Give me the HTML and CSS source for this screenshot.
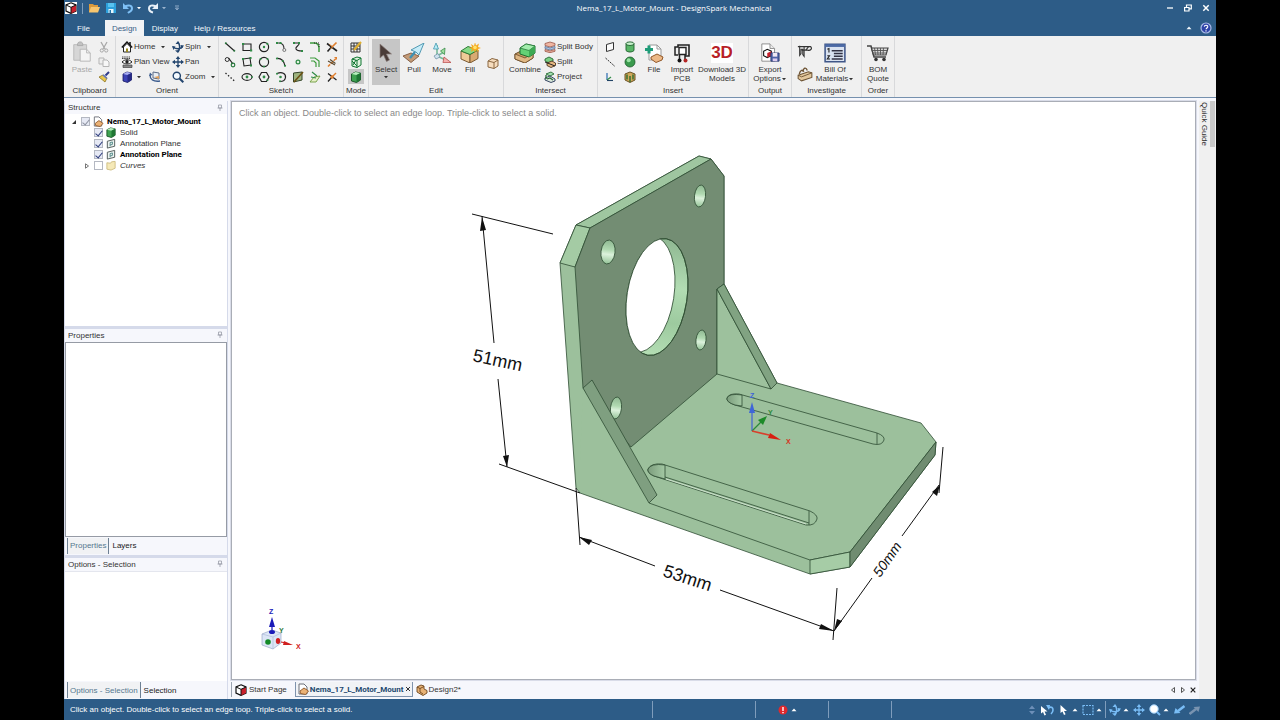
FILE: index.html
```html
<!DOCTYPE html>
<html lang="en">
<head>
<meta charset="utf-8">
<title>Nema_17_L_Motor_Mount - DesignSpark Mechanical</title>
<link rel="stylesheet" href="styles.css">
</head>
<body>
<svg class="sprite" aria-hidden="true">
  <symbol id="cube-red" viewBox="0 0 12 12"><path d="M6 .8 11 3v6L6 11.400 1 9V3z" fill="#fff" stroke="#111" stroke-width="1.200"/><path d="M6 5.300 11 3v6l-5 2.400z" fill="#c8202c"/><path d="M1 3l5 2.300L11 3M6 5.300v6" fill="none" stroke="#111"/></symbol>
  <symbol id="folder" viewBox="0 0 12 12"><path d="M1 2h4l1 1h4v7H1z" fill="#d99a3d"/><path d="M3 5h9l-2 5.500H1z" fill="#f7c66f"/></symbol>
  <symbol id="save" viewBox="0 0 12 12"><path d="M1 1h10v10H1z" fill="#2da0dc"/><path d="M3 1h6v4H3z" fill="#58c3f0"/><path d="M3.500 7h5v4h-5z" fill="#e8f6fd"/><path d="M4.500 8h1.500v3H4.500z" fill="#2379b0"/></symbol>
  <symbol id="undo" viewBox="0 0 12 12"><path d="M3 4.500c4-2 7-1 7 2S7 10 6 11" fill="none" stroke="#7fc0f5" stroke-width="2"/><path d="M1 1v6h6z" fill="#7fc0f5"/></symbol>
  <symbol id="redo" viewBox="0 0 12 12"><path d="M9 4.500c-4-2-7-1-7 2S4 10 6 10.500" fill="none" stroke="#e8f0f8" stroke-width="2"/><path d="M11 1v6H5z" fill="#e8f0f8"/></symbol>
  <symbol id="tri-down" viewBox="0 0 6 6"><path d="M1 2h4L3 4.200z" fill="currentColor"/></symbol>
  <symbol id="tri-up" viewBox="0 0 6 6"><path d="M.5 4.300h5L3 1.500z" fill="currentColor"/></symbol>
  <symbol id="pin" viewBox="0 0 8 8"><path d="M2.500 1h3v3h-3zM1.500 4h5M4 4v3" fill="none" stroke="#9a9da8" stroke-width=".8"/></symbol>
  <symbol id="paste" viewBox="0 0 22 24"><path d="M2 4h14v17H2z" fill="#d6d6d6" stroke="#b9b9b9"/><path d="M6 5c0-3 1-4 3-4s3 1 3 4z" fill="#c2c2c2" stroke="#aaa"/><path d="M9 9h7l4 4v9H9z" fill="#f4f4f4" stroke="#b5b5b5"/><path d="M16 9v4h4" fill="none" stroke="#b5b5b5"/></symbol>
  <symbol id="cut" viewBox="0 0 12 12"><path d="M3 1l4 7M9 1L5 8" stroke="#a8a8a8" stroke-width="1.300"/><circle cx="3.800" cy="9.500" r="1.600" fill="none" stroke="#a8a8a8"/><circle cx="8.200" cy="9.500" r="1.600" fill="none" stroke="#a8a8a8"/></symbol>
  <symbol id="copy" viewBox="0 0 12 12"><path d="M1 2h5v6H1z" fill="#eee" stroke="#b5b5b5"/><path d="M5 4h4l2 2v4.500H5z" fill="#f7f7f7" stroke="#b5b5b5"/></symbol>
  <symbol id="brush" viewBox="0 0 12 12"><path d="M11 1 7.500 4.500" stroke="#2f3b8a" stroke-width="2"/><path d="M1 6l4-2 4 3-2 4z" fill="#e8c64b" stroke="#8a7220" stroke-width=".8"/><path d="M5 3.800 9 7.500" stroke="#6478b8" stroke-width="1.600"/></symbol>
  <symbol id="home" viewBox="0 0 12 12"><path d="M2.500 6v5h7V6L6 2.500z" fill="#fff" stroke="#222"/><path d="M.8 6.500 6 1l5.200 5.500" fill="none" stroke="#111" stroke-width="1.400"/><path d="M5 7.500h2V11H5z" fill="#998a20"/><path d="M9 1v3" stroke="#111" stroke-width="1.500"/></symbol>
  <symbol id="planview" viewBox="0 0 12 12"><path d="M1 1h8M1 2.500h8" stroke="#444" stroke-dasharray="1.500 .7"/><path d="M1 6c3-3 7-3 10 0-3 2.500-7 2.500-10 0z" fill="#fff" stroke="#222"/><circle cx="6" cy="5.800" r="1.700" fill="#222"/><path d="M2 9h9v2.500H2z" fill="#888" stroke="#333" stroke-width=".6"/></symbol>
  <symbol id="cube-blue" viewBox="0 0 12 12"><path d="M2 3l4-2 4.500 1v7L6.500 11.500 2 10z" fill="#3c42b5" stroke="#15185e" stroke-width=".8"/><path d="M2 3l4-2 4.500 1-4 2z" fill="#a9aef0"/><path d="M6.500 4v7.500L10.500 9V2z" fill="#262a86"/></symbol>
  <symbol id="sheet-rot" viewBox="0 0 12 12"><path d="M4 1l6 1v6l-6-1z" fill="#e9eef4" stroke="#5b6b86"/><path d="M1 4c0 4 3 7 10 6" fill="none" stroke="#3d5d8e" stroke-width="1.400"/><path d="M5 6l5-1v3z" fill="#e0a05a"/><path d="M0 5l1-3.500L3.500 4z" fill="#3d5d8e"/></symbol>
  <symbol id="spin" viewBox="0 0 12 12"><path d="M6 1c2 3 2 7 0 10M1 6c3 2 7 2 9.500 0" fill="none" stroke="currentColor" stroke-width="1.500"/><path d="M6 0 3.500 3h4zM6 12l-3-2.500 4-.5zM0 5l3.500.5L1.500 9zM12 4.500 8.500 4l1 4z" fill="currentColor"/></symbol>
  <symbol id="pan" viewBox="0 0 12 12"><path d="M6 2v8M2 6h8" stroke="currentColor" stroke-width="1.300"/><path d="M6 0l2.300 3H3.700zM6 12l2.300-3H3.700zM0 6l3-2.300v4.600zM12 6 9 3.700v4.600z" fill="currentColor"/></symbol>
  <symbol id="zoom" viewBox="0 0 12 12"><circle cx="4.800" cy="4.800" r="3.600" fill="#f4faff" stroke="#23456e" stroke-width="1.400"/><path d="M7.500 7.500 11.300 11.300" stroke="#23456e" stroke-width="2"/></symbol>
  <symbol id="s-line" viewBox="0 0 12 12"><path d="M1.500 2 10.500 10" stroke="#222" stroke-width="1.200"/><circle cx="1.800" cy="2.300" r="1" fill="#2a7a3e"/><circle cx="10.300" cy="9.800" r="1" fill="#2a7a3e"/></symbol>
  <symbol id="s-tangent" viewBox="0 0 12 12"><circle cx="3.200" cy="3.500" r="2" fill="none" stroke="#333"/><path d="M4.500 2 9 8" stroke="#222" stroke-width="1.200"/><circle cx="9" cy="9" r="1.800" fill="none" stroke="#2a7a3e" stroke-width="1.200"/></symbol>
  <symbol id="s-construct" viewBox="0 0 12 12"><path d="M1.500 2 10.500 10" stroke="#222" stroke-width="1.300" stroke-dasharray="1.400 2"/></symbol>
  <symbol id="s-rect" viewBox="0 0 12 12"><path d="M2 3h8v6.500H2z" fill="none" stroke="#222" stroke-width="1.100"/><path d="M1 2h2.200v2H1zM9 8.500h2.200v2H9z" fill="#2f8a45"/></symbol>
  <symbol id="s-rect3" viewBox="0 0 12 12"><path d="M2 3l7-1 1 7-7 1z" fill="none" stroke="#222" stroke-width="1.100"/><path d="M1 2h2v2H1zM8.500 1h2v2h-2zM9 8.500h2v2H9z" fill="#2f8a45"/></symbol>
  <symbol id="s-ellipse" viewBox="0 0 12 12"><ellipse cx="6" cy="6" rx="5" ry="3.400" fill="none" stroke="#222" stroke-width="1.100"/><circle cx="6" cy="6" r="1.400" fill="#2f8a45"/><circle cx="11" cy="6" r=".9" fill="#2f8a45"/></symbol>
  <symbol id="s-circle" viewBox="0 0 12 12"><circle cx="6" cy="6" r="4.600" fill="none" stroke="#222" stroke-width="1.200"/><circle cx="6" cy="6" r="1.200" fill="#2f8a45"/><circle cx="9.300" cy="2.800" r="1.100" fill="#2f8a45"/></symbol>
  <symbol id="s-circle3" viewBox="0 0 12 12"><circle cx="6" cy="6" r="4.600" fill="none" stroke="#222" stroke-width="1.200"/><circle cx="2.500" cy="3" r="1" fill="#2f8a45"/><circle cx="9.500" cy="3" r="1" fill="#2f8a45"/><circle cx="6" cy="10.600" r="1" fill="#2f8a45"/></symbol>
  <symbol id="s-polygon" viewBox="0 0 12 12"><path d="M3.500 1.500h5L11 6l-2.500 4.500h-5L1 6z" fill="none" stroke="#222" stroke-width="1.200"/><circle cx="6" cy="6" r="1.400" fill="#2f8a45"/><circle cx="9.500" cy="9" r="1" fill="#2f8a45"/></symbol>
  <symbol id="s-tanarc" viewBox="0 0 12 12"><path d="M1 2h3c4 0 5 3 5 6" fill="none" stroke="#333" stroke-width="1.100"/><path d="M1 1h2v2H1zM4.500 1h2v2h-2z" fill="#2f8a45"/><circle cx="9.300" cy="9" r="1.500" fill="none" stroke="#777"/></symbol>
  <symbol id="s-arc3" viewBox="0 0 12 12"><path d="M1.500 2.500C6 2 9 5 10 10" fill="none" stroke="#222" stroke-width="1.200"/><circle cx="2" cy="2.500" r="1.100" fill="#2f8a45"/><circle cx="7.800" cy="5" r="1.100" fill="#2f8a45"/><circle cx="10" cy="9.800" r="1.100" fill="#2f8a45"/></symbol>
  <symbol id="s-sweep" viewBox="0 0 12 12"><path d="M2 2.500c5-2 9 0 8.500 4-.5 3-3 4-5.500 4" fill="none" stroke="#222" stroke-width="1.200"/><circle cx="5.500" cy="6" r="1.300" fill="#2f8a45"/><circle cx="2" cy="2.800" r="1" fill="#2f8a45"/><circle cx="5" cy="10.300" r="1" fill="#2f8a45"/></symbol>
  <symbol id="s-spline" viewBox="0 0 12 12"><path d="M1 2h6c1 3-4 3-3 6 1 2 4 2 6 2" fill="none" stroke="#222" stroke-width="1.200"/><path d="M1 1h2v2H1zM6 1h2v2H6zM9 9h2v2H9z" fill="#2f8a45"/></symbol>
  <symbol id="s-point" viewBox="0 0 12 12"><circle cx="6" cy="6" r="1.900" fill="#dff2e0" stroke="#2f8a45" stroke-width="1.200"/></symbol>
  <symbol id="s-face" viewBox="0 0 12 12"><path d="M1.500 2 10 1v8l-8.500 2z" fill="#9fb47f" stroke="#35462a"/><path d="M11 1 2 11" stroke="#6b5215" stroke-width="1.600"/></symbol>
  <symbol id="s-corner" viewBox="0 0 12 12"><path d="M1 2h4c3 0 5 2 5 5v4" fill="none" stroke="#3c9b3c" stroke-width="1.500"/><path d="M5 2h5v5" fill="none" stroke="#222" stroke-dasharray="1 1"/></symbol>
  <symbol id="s-offset" viewBox="0 0 12 12"><path d="M1 2h5l4 3v6M2 5h3l2 2v4" fill="none" stroke="#3c9b3c" stroke-width="1.200"/></symbol>
  <symbol id="s-project" viewBox="0 0 12 12"><path d="M1 11l4-5 6-1-4 6z" fill="#e7efc9" stroke="#6b9b3c" stroke-width=".9"/><path d="M3 1l5 4M2 6l5 1" stroke="#2f8a45" stroke-width="1.200"/></symbol>
  <symbol id="s-trim" viewBox="0 0 12 12"><path d="M1 2.500 11 10M1.500 10.500 5.500 6" stroke="#222" stroke-width="1.600"/><path d="M6 6l4.500-4.500" stroke="#e08030" stroke-width="1.700"/><path d="M3.500 3.500l3 2.500-2 2" stroke="#e08030" fill="none"/></symbol>
  <symbol id="s-split" viewBox="0 0 12 12"><path d="M2 10.500 10.500 2" stroke="#e08030" stroke-width="1.500" stroke-dasharray="3 1"/><path d="M2 5l7 4M4 3.500l5.500 4" stroke="#5a4b33" stroke-width="1.200"/><path d="M8 1h3v3z" fill="#e08030"/></symbol>
  <symbol id="s-bend" viewBox="0 0 12 12"><path d="M2 2.500 10.500 9M2 10.500 6 6" stroke="#222" stroke-width="1.300"/><path d="M6 6l4-4" stroke="#e08030" stroke-width="1.500"/><circle cx="6" cy="6" r="1.700" fill="#e08030"/></symbol>
  <symbol id="m-sketch" viewBox="0 0 12 12"><path d="M1 2h9v9H1zM4 2v9M7 2v9M1 5h9M1 8h9" fill="none" stroke="#333" stroke-width="1"/><path d="M11 1 4 9" stroke="#e0b030" stroke-width="2"/></symbol>
  <symbol id="m-section" viewBox="0 0 12 12"><path d="M2 3l5-2 4 1v7l-4 2.500L2 10z" fill="#dff2df" stroke="#173"/><path d="M2 3l5 1.500v7M7 4.500 11 2M2 5l5 5M3 9l3-5" fill="none" stroke="#173"/></symbol>
  <symbol id="solid" viewBox="0 0 12 12"><path d="M1.500 3l4-2L10.500 2v7l-4 2.500-5-1.500z" fill="#3fa251" stroke="#124d20" stroke-width=".9"/><path d="M1.500 3l4-2L10.500 2l-4 2z" fill="#b7edbd"/><path d="M6.500 4v7.500l4-2.500V2z" fill="#1f7634"/></symbol>
  <symbol id="select" viewBox="0 0 20 20"><path d="M4 1v14l3.500-3 3 6.500 3-1.500-3-6h5z" fill="#4a3c38" stroke="#8c807c" stroke-width=".7"/></symbol>
  <symbol id="pull" viewBox="0 0 22 20"><path d="M0 13l8-3 8 3-8 6.500z" fill="#c39b78" stroke="#80583c" stroke-width=".9"/><path d="M7 15l5-6" stroke="#3f92b4" stroke-width="2.400"/><path d="M8 7 21 0l-5 12-3-3z" fill="#c7ecf8" stroke="#4290aa" stroke-width=".9"/></symbol>
  <symbol id="move" viewBox="0 0 20 20"><path d="M5 13V2M5 13l7-4M5 13l11 5" fill="none" stroke="#7b9" stroke-width="1.600"/><path d="M4 0 1.500 6h5z" fill="#b9ecf6" stroke="#4499b3" stroke-width=".8"/><path d="M13 5 8.500 8l4 3.500z" fill="#9fdf9f" stroke="#3b8b4a" stroke-width=".8"/><path d="M12 14l7 5.500-8 .2z" fill="#f4b0ad" stroke="#b9504e" stroke-width=".8"/><path d="M2 13l4-2.500 2 3.500-4 2z" fill="#cfe3ef" stroke="#688aa0" stroke-width=".7"/></symbol>
  <symbol id="fill" viewBox="0 0 20 20"><path d="M1 8l9 3.500V20l-9-4z" fill="#efcb98" stroke="#7a5932"/><path d="M10 11.500 18 7v8.500L10 20z" fill="#d8aa72" stroke="#7a5932"/><path d="M1 8l7-4.500L18 7l-8 4.500z" fill="#86d987" stroke="#2d7d36"/><path d="M15-1l1 3.500 3-2-1 3.500 3 1-3 1 1 3-3-2-1 3-1-3-3 2 1-3-3-1 3-1-1-3 3 2z" fill="#f5a91f"/><circle cx="15" cy="4.500" r="1.800" fill="#ffe36a"/></symbol>
  <symbol id="cube-tan" viewBox="0 0 12 12"><path d="M1 4l4-2.500L11 3v6l-4 2.500L1 10z" fill="#f6dcbd" stroke="#8b6842"/><path d="M1 4l6 1.500V11.500M7 5.500 11 3" fill="none" stroke="#8b6842"/></symbol>
  <symbol id="combine" viewBox="0 0 22 20"><path d="M1 11l6-3 12 2v5l-8 5L1 16z" fill="#c89a64" stroke="#6b4b28"/><path d="M1 11l10 4 8-5v5l-8 5L1 16z" fill="#dfb784" stroke="#6b4b28" stroke-width=".8"/><path d="M6 5l6-4 9 2v7l-6 4-9-3z" fill="#63d175" stroke="#1f6f31"/><path d="M6 5l9 2.500L21 3 12 1z" fill="#a3edac" stroke="#1f6f31" stroke-width=".7"/><path d="M15 7.500V14l6-4V3z" fill="#3da953"/></symbol>
  <symbol id="splitbody" viewBox="0 0 12 12"><path d="M1 2.500 6 1l5 1.500v2L6 6 1 4.500z" fill="#f0b6a3" stroke="#9b5646" stroke-width=".8"/><path d="M1 5.500 6 7l5-1.500v2L6 9 1 7.500z" fill="#b3c8e4" stroke="#5a6f92" stroke-width=".8"/><path d="M1 8.500 6 10l5-1.500v1.800L6 11.700l-5-1.400z" fill="#f0b6a3" stroke="#9b5646" stroke-width=".8"/></symbol>
  <symbol id="split" viewBox="0 0 12 12"><path d="M1 3l4-2 4 2v2L5 7 1 5z" fill="#7bcf83" stroke="#276a34" stroke-width=".9"/><path d="M3 7l5-2 3.500 2v2.500L7 11.500 3 9.500z" fill="#e5b680" stroke="#4d3520" stroke-width=".9"/><path d="M1 6l10 4" stroke="#222"/></symbol>
  <symbol id="project" viewBox="0 0 12 12"><path d="M2 3l5-2 3 2-4 2z" fill="#a3e0b0" stroke="#276a34" stroke-width=".9"/><path d="M1 7l5-2 5 3v2l-4 1.500L1 9z" fill="#dbe8dc" stroke="#235" stroke-width=".9"/><path d="M3 8l3-1 3 2M2 4v4" fill="none" stroke="#276a34" stroke-width="1.300"/></symbol>
  <symbol id="plane" viewBox="0 0 12 12"><path d="M2.500 3.500 9.500 1.500v7l-7 2z" fill="#fafafa" stroke="#333"/></symbol>
  <symbol id="axis" viewBox="0 0 12 12"><path d="M1.500 2 11 10.500" stroke="#333" stroke-dasharray="2 1"/></symbol>
  <symbol id="origin" viewBox="0 0 12 12"><path d="M3 2v7" stroke="#2a6ab0" stroke-width="1.200"/><path d="M3 9l4-3" stroke="#2f8a45" stroke-width="1.200"/><path d="M3 9.500h6" stroke="#246" stroke-width="1.100"/></symbol>
  <symbol id="cylinder" viewBox="0 0 12 12"><path d="M2 2.500v7c2 2 6 2 8 0v-7" fill="#59b667" stroke="#1d5f2b" stroke-width=".9"/><ellipse cx="6" cy="2.700" rx="4" ry="1.800" fill="#c9f2cd" stroke="#1d5f2b" stroke-width=".9"/></symbol>
  <symbol id="sphere" viewBox="0 0 12 12"><circle cx="6" cy="6" r="5" fill="#3b9b4e" stroke="#1b5a2a" stroke-width=".8"/><circle cx="4.700" cy="4.200" r="2" fill="#9be3a5"/></symbol>
  <symbol id="library" viewBox="0 0 12 12"><path d="M1 3l5-2 5 2v6l-5 2.500L1 9z" fill="#d1a95c" stroke="#5a4314" stroke-width=".9"/><path d="M3 3.500v5M6 5v6M9 3.500v5" stroke="#39702f" stroke-width="1.500"/></symbol>
  <symbol id="file-add" viewBox="0 0 20 20"><path d="M5 2h8l4 4v11H5z" fill="#fff" stroke="#999"/><path d="M13 2v4h4" fill="none" stroke="#999"/><path d="M1 6.500h8M5 2.500v8" stroke="#1e9c78" stroke-width="3"/><path d="M7 14l6-3 6 3-1 3-6 2.500-5-3.500z" fill="#edb987" stroke="#92592a"/></symbol>
  <symbol id="pcb" viewBox="0 0 20 20"><path d="M3 6V4h3V2h11v11h-4" fill="none" stroke="#222" stroke-width="1.600"/><path d="M7 4.500h7v7H7z" fill="#fff" stroke="#222" stroke-width="1.400"/><path d="M3 6v6h3M7.500 12v4M13 12v4" fill="none" stroke="#222" stroke-width="1.500"/><circle cx="7.500" cy="17.500" r="2" fill="#111"/><circle cx="13.500" cy="17.500" r="2" fill="#b42424"/></symbol>
  <symbol id="export" viewBox="0 0 22 22"><path d="M2 1h9l5 5v14H2z" fill="#fff" stroke="#888"/><path d="M11 1v5h5" fill="#eee" stroke="#888"/><path d="M4 9l4-2 4.500 2v5L8 16l-4-2z" fill="#fff" stroke="#111" stroke-width="1.200"/><path d="M8 11l4.500-2v5L8 16z" fill="#c8202c"/><path d="M12 11h9v9h-9z" fill="#4f64a8" stroke="#2c3a72"/><path d="M14 11h5v4h-5z" fill="#f1e9f2"/><path d="M14 17h5v3h-5z" fill="#dce"/></symbol>
  <symbol id="caliper" viewBox="0 0 18 14"><path d="M1 2h14c3 2 0 5-3 4H5" fill="none" stroke="#333" stroke-width="1.300"/><path d="M3 1v11l1.500-2V5h2v6l1.500 2V2M13 2l-3 4" fill="none" stroke="#333" stroke-width="1.200"/></symbol>
  <symbol id="mass" viewBox="0 0 14 14"><path d="M1 8l9-3 3 1v4l-9 3-3-2z" fill="#e3c79c" stroke="#6c5232" stroke-width=".9"/><path d="M2 7c1-4 3-4 4-2M5 5c1-4 3-4 4-1" fill="none" stroke="#6c5232" stroke-width="1.200"/><path d="M1 8l3 1.500 9-3.500" fill="none" stroke="#6c5232" stroke-width=".8"/></symbol>
  <symbol id="bom" viewBox="0 0 20 18"><path d="M1 1h18v16H1z" fill="#d9e2f1" stroke="#3f5688" stroke-width="1.400"/><path d="M1 1h18v2.500H1z" fill="#4c6aa6"/><path d="M3 5.500l1.500-.5v3.500M3 11.500h2L3 14.500h2.500" fill="none" stroke="#222"/><path d="M7 7h10M9 9.500h8M9 12h8M7 14.500h10" stroke="#334" stroke-width="1.300"/></symbol>
  <symbol id="cart" viewBox="0 0 22 18"><path d="M0 2h4l3 11h12" fill="none" stroke="#444" stroke-width="1.500"/><path d="M4.500 4H21l-2 7H6.500z" fill="#ddd" stroke="#444" stroke-width="1.200"/><path d="M7.500 4l1 7M10.500 4l.5 7M13.500 4v7M16.500 4l-.5 7M5 6.500h15M6 9h13.500" stroke="#555" stroke-width=".9"/><circle cx="9" cy="15.500" r="1.800" fill="#333"/><circle cx="17" cy="15.500" r="1.800" fill="#333"/></symbol>
  <symbol id="doc-part" viewBox="0 0 12 12"><path d="M2 1h5l3 3v7H2z" fill="#fff" stroke="#6b6f78"/><path d="M3 8l4-3 4.500 3-3 3.500-5-1z" fill="#ebb377" stroke="#8d5525" stroke-width=".9"/></symbol>
  <symbol id="design" viewBox="0 0 12 12"><path d="M1 3l4-2 3 1v3l3 1.500V9l-4 2.500L1 8z" fill="#e7b276" stroke="#6d451d" stroke-width=".9"/><path d="M1 3l3 1.500V8l3 2M4 4.500 8 2.500" fill="none" stroke="#6d451d" stroke-width=".9"/></symbol>
  <symbol id="anno" viewBox="0 0 12 12"><path d="M2 3.500 10 1.500v7.500L2 11z" fill="#edf2f0" stroke="#4c5654"/><path d="M5 9V5l2.500-.7V7L5 7.700" fill="none" stroke="#4c8584"/></symbol>
  <symbol id="layer" viewBox="0 0 12 12"><path d="M1.500 3l4 .5 1-1.500 4-.5V9l-4.500 2-4.500-1z" fill="#f5e9b8" stroke="#c9b77a" stroke-width=".9"/></symbol>
  <symbol id="cursor" viewBox="0 0 12 12"><path d="M2.500 1v8l2-1.500L6 11l1.600-.8L6 7h3z" fill="#fff"/></symbol>
  <symbol id="cursor-undo" viewBox="0 0 14 12"><path d="M1 2v7.500l2-1.500 1.500 3.500 1.500-.8L4.500 7.500h3z" fill="#fff"/><path d="M8 4c4-2 5 0 5 2s-1 3-2 4" fill="none" stroke="#79bdf6" stroke-width="1.600"/><path d="M6 1l4 0-1 5z" fill="#79bdf6"/></symbol>
  <symbol id="box-select" viewBox="0 0 12 12"><path d="M1 1.500h10v9H1z" fill="none" stroke="#79bdf6" stroke-width="1.200" stroke-dasharray="2 1"/></symbol>
  <symbol id="zoom-lens" viewBox="0 0 12 12"><circle cx="5" cy="5" r="4.200" fill="#fff" stroke="#9fd0fa"/><path d="M8 8l3 3" stroke="#79bdf6" stroke-width="2"/></symbol>
  <symbol id="arrow-back" viewBox="0 0 12 12"><path d="M11.500 2 5 7" stroke="currentColor" stroke-width="2.500"/><path d="M1 9.500 2.500 4l5 5z" fill="currentColor"/></symbol>
</svg>

<div class="app">
  <header class="titlebar">
    <div class="quick">
      <svg class="ic12 logo"><use href="#cube-red"/></svg>
      <span class="quick-sep"></span>
      <button class="btn" aria-label="Open"><svg class="ic12"><use href="#folder"/></svg></button>
      <button class="btn" aria-label="Save"><svg class="ic12"><use href="#save"/></svg></button>
      <button class="btn" aria-label="Undo"><svg class="ic12"><use href="#undo"/></svg><svg class="ic6"><use href="#tri-down"/></svg></button>
      <button class="btn" aria-label="Redo"><svg class="ic12"><use href="#redo"/></svg><svg class="ic6 dim"><use href="#tri-down"/></svg></button>
      <button class="btn customize" aria-label="Customize toolbar"><svg class="ic6" viewBox="0 0 6 6"><path d="M1 1h4M1.500 3h3L3 5z" fill="none" stroke="#b9cce2" stroke-width=".7"/></svg></button>
    </div>
    <h1 class="title">Nema_17_L_Motor_Mount - DesignSpark Mechanical</h1>
    <div class="window-buttons">
      <button class="btn" aria-label="Minimize"><svg class="ic8" viewBox="0 0 8 8"><path d="M1 4h6" stroke="#fff" stroke-width="1.300"/></svg></button>
      <button class="btn" aria-label="Restore"><svg class="ic8" viewBox="0 0 8 8"><path d="M.6 3.500h4.400v3.500H.6zM2.500 3V1h4.800v3.800H5.500" fill="none" stroke="#fff" stroke-width="1.200"/></svg></button>
      <button class="btn" aria-label="Close"><svg class="ic8" viewBox="0 0 8 8"><path d="M1.300 1.300 6.700 6.700M6.700 1.300 1.300 6.700" stroke="#fff" stroke-width="1.500"/></svg></button>
    </div>
  </header>

  <nav class="menu">
    <button class="menu-tab">File</button>
    <button class="menu-tab is-active">Design</button>
    <button class="menu-tab">Display</button>
    <button class="menu-tab">Help / Resources</button>
    <span class="menu-end">
      <button class="btn" aria-label="Collapse ribbon"><svg class="ic6"><use href="#tri-up"/></svg></button>
      <button class="btn" aria-label="Help"><svg class="ic12" viewBox="0 0 12 12"><circle cx="6" cy="6" r="5" fill="#2e43a8" stroke="#a8b9e6" stroke-width="1.200"/><path d="M4.300 4.600C4.500 2.700 8 2.800 7.700 4.900 7.500 6 6.200 6 6.100 7.300M6 8.300v1.200" fill="none" stroke="#fff" stroke-width="1.200"/></svg></button>
    </span>
  </nav>

  <section class="ribbon" aria-label="Design tools">
    <div class="group g-clipboard">
      <div class="group-body">
        <button class="big disabled"><svg class="ic22"><use href="#paste"/></svg>Paste</button>
        <div class="stack">
          <button class="small" aria-label="Cut"><svg class="ic12"><use href="#cut"/></svg></button>
          <button class="small" aria-label="Copy"><svg class="ic12"><use href="#copy"/></svg></button>
          <button class="small" aria-label="Format painter"><svg class="ic12"><use href="#brush"/></svg></button>
        </div>
      </div>
      <h2 class="group-name">Clipboard</h2>
    </div>

    <div class="group g-orient">
      <div class="group-body orient-grid">
        <button class="small"><svg class="ic12"><use href="#home"/></svg>Home<svg class="ic6 gap-left"><use href="#tri-down"/></svg></button>
        <button class="small navy"><svg class="ic12"><use href="#spin"/></svg><span>Spin</span><svg class="ic6 gap-left"><use href="#tri-down"/></svg></button>
        <button class="small"><svg class="ic12"><use href="#planview"/></svg>Plan View</button>
        <button class="small navy"><svg class="ic12"><use href="#pan"/></svg><span>Pan</span></button>
        <span class="pair">
          <button class="small" aria-label="View cube"><svg class="ic12"><use href="#cube-blue"/></svg><svg class="ic6"><use href="#tri-down"/></svg></button>
          <button class="small" aria-label="Rotate sheet"><svg class="ic12"><use href="#sheet-rot"/></svg></button>
        </span>
        <button class="small"><svg class="ic12"><use href="#zoom"/></svg>Zoom<svg class="ic6 gap-left"><use href="#tri-down"/></svg></button>
      </div>
      <h2 class="group-name">Orient</h2>
    </div>

    <div class="group g-sketch">
      <div class="group-body sketch-grid">
        <button class="small" aria-label="Line"><svg class="ic12"><use href="#s-line"/></svg></button>
        <button class="small" aria-label="Rectangle"><svg class="ic12"><use href="#s-rect"/></svg></button>
        <button class="small" aria-label="Circle"><svg class="ic12"><use href="#s-circle"/></svg></button>
        <button class="small" aria-label="Tangent arc"><svg class="ic12"><use href="#s-tanarc"/></svg></button>
        <button class="small" aria-label="Spline"><svg class="ic12"><use href="#s-spline"/></svg></button>
        <button class="small" aria-label="Rounded corner"><svg class="ic12"><use href="#s-corner"/></svg></button>
        <button class="small" aria-label="Trim away"><svg class="ic12"><use href="#s-trim"/></svg></button>
        <button class="small" aria-label="Tangent line"><svg class="ic12"><use href="#s-tangent"/></svg></button>
        <button class="small" aria-label="Three-point rectangle"><svg class="ic12"><use href="#s-rect3"/></svg></button>
        <button class="small" aria-label="Three-point circle"><svg class="ic12"><use href="#s-circle3"/></svg></button>
        <button class="small" aria-label="Three-point arc"><svg class="ic12"><use href="#s-arc3"/></svg></button>
        <button class="small" aria-label="Point"><svg class="ic12"><use href="#s-point"/></svg></button>
        <button class="small" aria-label="Offset curve"><svg class="ic12"><use href="#s-offset"/></svg></button>
        <button class="small" aria-label="Split curve"><svg class="ic12"><use href="#s-split"/></svg></button>
        <button class="small" aria-label="Construction line"><svg class="ic12"><use href="#s-construct"/></svg></button>
        <button class="small" aria-label="Ellipse"><svg class="ic12"><use href="#s-ellipse"/></svg></button>
        <button class="small" aria-label="Polygon"><svg class="ic12"><use href="#s-polygon"/></svg></button>
        <button class="small" aria-label="Sweep arc"><svg class="ic12"><use href="#s-sweep"/></svg></button>
        <button class="small" aria-label="Face curve"><svg class="ic12"><use href="#s-face"/></svg></button>
        <button class="small" aria-label="Project to sketch"><svg class="ic12"><use href="#s-project"/></svg></button>
        <button class="small" aria-label="Bend"><svg class="ic12"><use href="#s-bend"/></svg></button>
      </div>
      <h2 class="group-name">Sketch</h2>
    </div>

    <div class="group g-mode">
      <div class="group-body">
        <div class="stack">
          <button class="small" aria-label="Sketch mode"><svg class="ic12"><use href="#m-sketch"/></svg></button>
          <button class="small" aria-label="Section mode"><svg class="ic12"><use href="#m-section"/></svg></button>
          <button class="small is-on" aria-label="3D mode"><svg class="ic12"><use href="#solid"/></svg></button>
        </div>
      </div>
      <h2 class="group-name">Mode</h2>
    </div>

    <div class="group g-edit">
      <div class="group-body">
        <button class="big is-on"><svg class="ic22"><use href="#select"/></svg>Select<svg class="ic6"><use href="#tri-down"/></svg></button>
        <button class="big"><svg class="ic22"><use href="#pull"/></svg>Pull</button>
        <button class="big"><svg class="ic22"><use href="#move"/></svg>Move</button>
        <button class="big"><svg class="ic22"><use href="#fill"/></svg>Fill</button>
        <button class="small lone" aria-label="Shell"><svg class="ic12"><use href="#cube-tan"/></svg></button>
      </div>
      <h2 class="group-name">Edit</h2>
    </div>

    <div class="group g-intersect">
      <div class="group-body">
        <button class="big wide"><svg class="ic22"><use href="#combine"/></svg>Combine</button>
        <div class="stack">
          <button class="small"><svg class="ic12"><use href="#splitbody"/></svg>Split Body</button>
          <button class="small"><svg class="ic12"><use href="#split"/></svg>Split</button>
          <button class="small"><svg class="ic12"><use href="#project"/></svg>Project</button>
        </div>
      </div>
      <h2 class="group-name">Intersect</h2>
    </div>

    <div class="group g-insert">
      <div class="group-body">
        <div class="insert-grid">
          <button class="small" aria-label="Plane"><svg class="ic12"><use href="#plane"/></svg></button>
          <button class="small" aria-label="Cylinder"><svg class="ic12"><use href="#cylinder"/></svg></button>
          <button class="small" aria-label="Axis"><svg class="ic12"><use href="#axis"/></svg></button>
          <button class="small" aria-label="Sphere"><svg class="ic12"><use href="#sphere"/></svg></button>
          <button class="small" aria-label="Origin"><svg class="ic12"><use href="#origin"/></svg></button>
          <button class="small" aria-label="Library"><svg class="ic12"><use href="#library"/></svg></button>
        </div>
        <button class="big"><svg class="ic22"><use href="#file-add"/></svg>File</button>
        <button class="big"><svg class="ic22"><use href="#pcb"/></svg>Import<br>PCB</button>
        <button class="big download"><span class="mark-3d" aria-hidden="true">3D</span>Download 3D<br>Models</button>
      </div>
      <h2 class="group-name">Insert</h2>
    </div>

    <div class="group g-output">
      <div class="group-body">
        <button class="big wide"><svg class="ic22"><use href="#export"/></svg>Export<span class="drop">Options<svg class="ic6"><use href="#tri-down"/></svg></span></button>
      </div>
      <h2 class="group-name">Output</h2>
    </div>

    <div class="group g-investigate">
      <div class="group-body">
        <div class="stack spaced">
          <button class="small" aria-label="Measure"><svg class="ic16"><use href="#caliper"/></svg></button>
          <button class="small" aria-label="Mass"><svg class="ic16"><use href="#mass"/></svg></button>
        </div>
        <button class="big wide"><svg class="ic22"><use href="#bom"/></svg>Bill Of<span class="drop">Materials<svg class="ic6"><use href="#tri-down"/></svg></span></button>
      </div>
      <h2 class="group-name">Investigate</h2>
    </div>

    <div class="group g-order">
      <div class="group-body">
        <button class="big"><svg class="ic22"><use href="#cart"/></svg>BOM<br>Quote</button>
      </div>
      <h2 class="group-name">Order</h2>
    </div>
  </section>

  <div class="workspace">
    <aside class="side">
      <section class="panel">
        <header class="panel-head"><h2>Structure</h2><svg class="ic8"><use href="#pin"/></svg></header>
        <ul class="tree">
          <li class="node root"><svg class="ic6 twist" viewBox="0 0 6 6"><path d="M5 1v4H1z" fill="#333"/></svg><input class="tick faint" type="checkbox" id="n0" checked><svg class="ic12"><use href="#doc-part"/></svg><label class="strong" for="n0">Nema_17_L_Motor_Mount</label></li>
          <li class="node"><span class="twist"></span><input class="tick" type="checkbox" id="n1" checked><svg class="ic12"><use href="#solid"/></svg><label for="n1">Solid</label></li>
          <li class="node"><span class="twist"></span><input class="tick" type="checkbox" id="n2" checked><svg class="ic12"><use href="#anno"/></svg><label for="n2">Annotation Plane</label></li>
          <li class="node"><span class="twist"></span><input class="tick" type="checkbox" id="n3" checked><svg class="ic12"><use href="#anno"/></svg><label class="strong" for="n3">Annotation Plane</label></li>
          <li class="node"><svg class="ic6 twist" viewBox="0 0 6 6"><path d="M1.500.8 4.500 3 1.500 5.200z" fill="#fff" stroke="#555" stroke-width=".8"/></svg><input class="tick" type="checkbox" id="n4"><svg class="ic12"><use href="#layer"/></svg><label class="slanted" for="n4">Curves</label></li>
        </ul>
      </section>
      <section class="panel">
        <header class="panel-head"><h2>Properties</h2><svg class="ic8"><use href="#pin"/></svg></header>
        <div class="panel-box outlined"></div>
        <div class="panel-tabs"><button class="panel-tab is-active">Properties</button><button class="panel-tab">Layers</button></div>
      </section>
      <section class="panel">
        <header class="panel-head"><h2>Options - Selection</h2><svg class="ic8"><use href="#pin"/></svg></header>
        <div class="panel-box"></div>
        <div class="panel-tabs"><button class="panel-tab is-active">Options - Selection</button><button class="panel-tab">Selection</button></div>
      </section>
    </aside>

    <main class="main">
      <div class="viewport">
        <svg class="scene" viewBox="232 102 963 577" role="img" aria-label="Motor mount with dimensions">
          <defs>
            <linearGradient id="bore" x1="0" y1="0" x2="0" y2="1"><stop offset="0" stop-color="#8fb892"/><stop offset=".4" stop-color="#b2dcb3"/><stop offset=".7" stop-color="#9dca9f"/><stop offset="1" stop-color="#b4deb4"/></linearGradient>
            <linearGradient id="hole" x1="0" y1="0" x2="0" y2="1"><stop offset="0" stop-color="#8fb892"/><stop offset=".4" stop-color="#b0d9b1"/><stop offset=".6" stop-color="#dcf2dc"/><stop offset="1" stop-color="#93c296"/></linearGradient>
            <linearGradient id="cap" x1="0" y1="0" x2="1" y2="0"><stop offset="0" stop-color="#7c9d7d"/><stop offset="1" stop-color="#a3c8a3"/></linearGradient>
            <clipPath id="bore-clip"><ellipse cx="657" cy="297" rx="30" ry="59" transform="rotate(9 657 297)"/></clipPath>
          </defs>
          <g stroke="#2f4d33" stroke-width=".8" stroke-linejoin="round">
            <path d="M576 225 699 156 711 159 724 176V284L777 383 921 423 936 442 935 455 850 567 810 574 580 493 576 488 560 263z" fill="#9cc09c"/>
            <path d="M576 225 699 156 711 159 590 228z" fill="#9fc6a0"/>
            <path d="M576 225 590 228 575 267 560 263z" fill="#a4cba4"/>
            <path d="M590 228 711 159 724 176V284L717 289V374L631 447 583 388 575 267z" fill="#738d73"/>
            <ellipse cx="608" cy="252" rx="7" ry="12" transform="rotate(7 608 252)" fill="url(#hole)"/>
            <ellipse cx="700" cy="196" rx="5.500" ry="11" transform="rotate(7 700 196)" fill="url(#hole)"/>
            <ellipse cx="701" cy="340" rx="5" ry="10" transform="rotate(7 701 340)" fill="url(#hole)"/>
            <ellipse cx="616" cy="408" rx="5.500" ry="11" transform="rotate(7 616 408)" fill="url(#hole)"/>
            <ellipse cx="657" cy="297" rx="30" ry="59" transform="rotate(9 657 297)" fill="url(#bore)"/>
            <g clip-path="url(#bore-clip)"><ellipse cx="644" cy="294" rx="30" ry="59" transform="rotate(9 644 294)" fill="#fff"/></g>
            <ellipse cx="657" cy="297" rx="30" ry="59" transform="rotate(9 657 297)" fill="none"/>
            <path d="M717 289 771 389 717 374z" fill="#9dc19d"/>
            <path d="M717 289 724 284 777 383 771 389z" fill="#81a382"/>
            <path d="M583 388 649 503 610 500 580 460z" fill="#9cc09c" stroke="none"/>
            <path d="M583 388 592 380 657 495 649 503z" fill="#7f9f80"/>
            <path d="M649 503 810 560 850 552 936 442" fill="none"/>
            <path d="M810 560 850 552V567L810 574z" fill="#a6cca6"/>
            <path d="M850 552 936 442 935 455 850 567z" fill="#708c71"/>
            <path d="M739 394 877 433Q885 436 884 440 882 446 873 444L735 405Q726 402 727 398 729 393 739 394z" fill="#9cc09c"/>
            <path d="M742 395V406L735 405Q726 402 727 398 729 393 742 395z" fill="url(#cap)"/>
            <path d="M877 433V444" />
            <path d="M662 464 810 511Q818 515 817 519 815 526 806 525L654 476Q647 473 648 469 651 463 662 464z" fill="#9cc09c"/>
            <path d="M665 465V479L654 476Q647 473 648 469 651 463 665 465z" fill="url(#cap)"/>
            <path d="M809 511V525M665 477 809 523" fill="none"/>
            <path d="M666 479 806 524" stroke="#dcebdc"/>
          </g>
          <g stroke="#111" stroke-width="1" fill="#111">
            <path d="M472 214 553 234M482 216 494 343M498 379 507 467M499 464 580 493M576 488 580 545M579 537 655 566M720 590 834 631M837 588 833 640M834 631 872 578M902 536 939 485M943 447 939 493" fill="none"/>
            <path d="M482 217 486 230 480 231zM507 467 503 456 509 455zM579 537 592 540 589 545zM834 631 821 624 819 629zM834 631 842 621 837 619zM940 485 932 492 937 496z" stroke="none"/>
          </g>
          <g class="dimension">
            <text transform="translate(472 361) rotate(12)">51mm</text>
            <text transform="translate(662 576) rotate(18)">53mm</text>
            <text class="dimension-far" transform="translate(880 578) rotate(-55)">50mm</text>
          </g>
          <g class="axis-name" stroke-width="1.200">
            <path d="M752 431V412" stroke="#5878c8" stroke-width="1.600"/><path d="M752 402 755 413H749z" fill="#3f66d8"/>
            <path d="M752 431 761 422" stroke="#2b8a3a"/><path d="M767 416 763 425 758 420z" fill="#1d8a28"/>
            <path d="M752 431 769 435" stroke="#d8402c" stroke-width="1.600"/><path d="M781 440 768 438 770 433z" fill="#d81e10"/>
            <text x="750" y="398" fill="#3f66d8">Z</text><text x="768" y="415" fill="#2b8a3a">Y</text><text x="786" y="444" fill="#d83020">X</text>
          </g>
          <g class="axis-name">
            <path d="M262 634 272 630 281 633V643L273 649 262 645z" fill="#dce6f6" stroke="#8d9cc0" stroke-width=".6"/>
            <path d="M262 634 273 637 281 633M273 637V649" fill="none" stroke="#a9b6d4" stroke-width=".6"/>
            <ellipse cx="272" cy="632" rx="3" ry="2" fill="#1a1ab8"/><circle cx="268" cy="642" r="2.800" fill="#148a28"/><ellipse cx="278" cy="641" rx="2.200" ry="3" fill="#d02020"/>
            <path d="M272 630V626" stroke="#1a1ab8" stroke-width="1.200"/><path d="M272 617 275 627H269z" fill="#1a1ab8"/>
            <path d="M281 642 286 643" stroke="#d02020" stroke-width="1.200"/><path d="M293 645 283 645 284 641z" fill="#d02020"/>
            <text x="269" y="614" fill="#1a1ab8">Z</text><text x="279" y="633" fill="#2b7a3a">Y</text><text x="296" y="649" fill="#d02020">X</text>
          </g>
        </svg>
        <p class="hint">Click an object. Double-click to select an edge loop. Triple-click to select a solid.</p>
      </div>
      <nav class="doc-tabs">
        <button class="doc-tab"><svg class="ic12"><use href="#cube-red"/></svg>Start Page</button>
        <button class="doc-tab is-active"><svg class="ic12"><use href="#doc-part"/></svg>Nema_17_L_Motor_Mount<svg class="ic6" viewBox="0 0 6 6"><path d="M1 1l4 4M5 1 1 5" stroke="#333"/></svg></button>
        <button class="doc-tab open"><svg class="ic12"><use href="#design"/></svg>Design2*</button>
        <span class="doc-nav">
          <button class="btn" aria-label="Previous tab"><svg class="ic6" viewBox="0 0 6 6"><path d="M4.500.5v5L1.500 3z" fill="none" stroke="#444" stroke-width=".9"/></svg></button>
          <button class="btn" aria-label="Next tab"><svg class="ic6" viewBox="0 0 6 6"><path d="M1.500.5v5L4.500 3z" fill="none" stroke="#444" stroke-width=".9"/></svg></button>
          <button class="btn" aria-label="Close tab"><svg class="ic6" viewBox="0 0 6 6"><path d="M.7.7l4.600 4.600M5.300.7.7 5.300" stroke="#222" stroke-width="1.200"/></svg></button>
        </span>
      </nav>
    </main>

    <aside class="guide"><button class="guide-tab">Quick Guide</button></aside>
  </div>

  <footer class="status">
    <p class="status-text">Click an object. Double-click to select an edge loop. Triple-click to select a solid.</p>
    <div class="status-cell cell-a"></div>
    <div class="status-cell cell-b"><svg class="ic10" viewBox="0 0 10 10"><circle cx="5" cy="5" r="4.500" fill="#e0282c"/><path d="M5 2v4M5 7v1.300" stroke="#fff" stroke-width="1.400"/></svg><svg class="ic6"><use href="#tri-up"/></svg></div>
    <div class="status-cell cell-c"></div>
    <div class="status-cell cell-d">
      <svg class="ic10 steps" viewBox="0 0 10 10"><path d="M2 4h6L5 .5zM2 6h6L5 9.500z" fill="#6d8fb8"/></svg>
      <button class="btn" aria-label="Revert selection"><svg class="ic14"><use href="#cursor-undo"/></svg></button>
      <button class="btn" aria-label="Select"><svg class="ic12"><use href="#cursor"/></svg><svg class="ic6"><use href="#tri-up"/></svg></button>
      <button class="btn" aria-label="Box select"><svg class="ic12"><use href="#box-select"/></svg><svg class="ic6"><use href="#tri-up"/></svg></button>
      <span class="status-sep"></span>
      <button class="btn sky" aria-label="Spin"><svg class="ic12"><use href="#spin"/></svg><svg class="ic6 pale"><use href="#tri-up"/></svg></button>
      <button class="btn sky" aria-label="Pan"><svg class="ic12"><use href="#pan"/></svg></button>
      <button class="btn" aria-label="Zoom"><svg class="ic12"><use href="#zoom-lens"/></svg><svg class="ic6"><use href="#tri-up"/></svg></button>
      <button class="btn sky" aria-label="Previous view"><svg class="ic12"><use href="#arrow-back"/></svg></button>
      <button class="btn muted" aria-label="Next view"><svg class="ic12 flip"><use href="#arrow-back"/></svg></button>
    </div>
  </footer>
</div>
</body>
</html>
```
FILE: styles.css
```css
* { box-sizing: border-box; }
html, body { height: 100%; }
body {
  margin: 0;
  padding: 0 5%;
  background: #000;
  color: #333;
  font: 8px/9px "Liberation Sans", Arial, sans-serif;
}
h1, h2, p, ul { margin: 0; padding: 0; font: inherit; }
button {
  margin: 0;
  padding: 0;
  border: 0;
  background: none;
  color: inherit;
  font: inherit;
  white-space: nowrap;
}
svg { display: block; flex: none; }
.sprite { display: none; }
.ic6 { width: 6px; height: 6px; }
.ic8 { width: 8px; height: 8px; }
.ic10 { width: 10px; height: 10px; }
.ic12 { width: 12px; height: 12px; }
.ic14 { width: 14px; height: 12px; }
.ic16 { width: 16px; height: 16px; }
.ic22 { width: 22px; height: 22px; }
.btn { display: flex; align-items: center; gap: 2px; }

.app {
  display: flex;
  flex-direction: column;
  height: 100%;
  background: #f0f0f0;
}

/* Title bar and menu */
.titlebar {
  display: grid;
  grid-template-columns: 1fr auto 1fr;
  align-items: center;
  height: 16px;
  background: #2d5c87;
  color: #fff;
}
.quick { display: flex; align-items: center; gap: 5px; padding-left: 1px; }
.logo { background: #fff; }
.quick-sep { width: 1px; height: 11px; background: #7d9dbd; }
.dim { color: #9ab3cd; }
.customize { margin-left: 2px; }
.title { padding-left: 68px; font: 8px/12px "Open Sans", "Noto Sans", sans-serif; }
.window-buttons { display: flex; justify-content: flex-end; gap: 10px; padding-right: 6px; }

.menu {
  display: flex;
  align-items: flex-end;
  height: 20px;
  padding-left: 1px;
  background: #2d5c87;
  color: #f3f7fb;
}
.menu-tab { height: 16px; padding: 0 8px; }
.menu-tab:first-child { padding: 0 15px 0 12px; }
.menu-tab.is-active { padding: 0 7px; background: #f2f3f5; color: #3c6288; }
.menu-end { display: flex; align-items: center; gap: 8px; margin-left: auto; padding: 0 4px 2px 0; }

/* Ribbon */
.ribbon {
  display: flex;
  height: 62px;
  border-bottom: 1px solid #7590ae;
  background: #f0f0f0;
}
.group {
  display: flex;
  flex: none;
  flex-direction: column;
  border-right: 1px solid #d8d9db;
}
.group-body { display: flex; height: 50px; padding: 3px 2px 0; }
.group-name { line-height: 10px; text-align: center; white-space: nowrap; }
.g-clipboard { width: 52px; }
.g-orient { width: 103px; }
.g-sketch { width: 125px; }
.g-mode { width: 25px; }
.g-edit { width: 135px; }
.g-edit .group-body { padding-left: 3px; }
.g-intersect { width: 94px; }
.g-insert { width: 151px; }
.g-output { width: 43px; }
.g-investigate { width: 70px; }
.g-order { width: 33px; }

.big {
  display: flex;
  flex: none;
  flex-direction: column;
  align-items: center;
  width: 28px;
  height: 46px;
  padding-top: 4px;
  line-height: 9px;
}
.big .ic22 { width: 22px; height: 20px; margin-bottom: 2px; }
.big.wide { width: 38px; }
.big.disabled { width: 32px; padding-top: 2px; color: #a9a9a9; }
.big.disabled .ic22 { height: 22px; }
.big.download { width: 52px; }
.drop { display: flex; align-items: center; }
.small { display: flex; align-items: center; gap: 1px; height: 15px; }
.is-on { background: #c6c6c6; }
.stack { display: flex; flex-direction: column; }
.stack.spaced { justify-content: space-around; width: 22px; align-items: center; }
.navy .ic12 { color: #23456e; }
.gap-left { margin-left: 4px; }
.pair { display: flex; gap: 7px; }
.pair .ic6 { margin-left: 2px; }
.lone { align-self: center; margin-left: 3px; }
.orient-grid { display: grid; grid-template-columns: 51px 1fr; grid-auto-rows: 15px; padding-left: 5px; padding-right: 0; }
.sketch-grid { display: grid; grid-template-columns: repeat(7, 17px); grid-auto-rows: 15px; justify-items: center; }
.insert-grid { display: grid; grid-template-columns: repeat(2, 20px); grid-auto-rows: 15px; justify-items: center; }
.g-mode .group-body { justify-content: center; }
.g-mode .small { padding: 0 2px; }
.mark-3d {
  margin-bottom: 2px;
  color: #b81f26;
  font: bold 17px/20px "Liberation Sans", Arial, sans-serif;
  background: #fff;
}

/* Workspace */
.workspace {
  display: grid;
  flex: 1;
  grid-template-columns: 164px 1fr 17px;
  gap: 0 3px;
  min-height: 0;
  padding-top: 3px;
  background: #f6f7fc;
}
.side {
  display: grid;
  grid-template-rows: 226fr 227fr 142fr;
  gap: 3px;
  padding-left: 1px;
  background: #d5daea;
  border-right: 1px solid #d5daea;
}
.panel { display: flex; flex-direction: column; min-height: 0; background: #f6f7fc; }
.panel-head { display: flex; align-items: center; justify-content: space-between; height: 13px; padding: 0 3px; }
.tree { flex: 1; padding: 2px 0 0 6px; background: #fff; list-style: none; }
.node { display: flex; align-items: center; height: 11px; padding-left: 13px; }
.node.root { padding-left: 0; }
.twist { width: 6px; margin-right: 4px; }
.node .ic12 { width: 12px; height: 11px; margin: 0 3px 0 2px; }
.tick {
  display: grid;
  place-items: center;
  flex: none;
  appearance: none;
  width: 9px;
  height: 9px;
  margin: 0;
  border: 1px solid #b4b8c2;
  background: #fff;
}
.tick:checked { background: #e6e9f4; }
.tick:checked::before {
  content: "";
  width: 3px;
  height: 6px;
  border: solid #2c3a7c;
  border-width: 0 1px 1px 0;
  transform: rotate(40deg);
}
.tick.faint:checked::before { border-color: #8d92a0; }
.strong { color: #000; font-family: Roboto, "Liberation Sans", sans-serif; font-weight: bold; }
.slanted { font-style: italic; }
.panel-box { flex: 1; background: #fff; border-top: 1px solid #e4e6ee; }
.panel-box.outlined { border: 1px solid #969ba5; }
.panel-tabs { display: flex; height: 18px; padding: 1px 2px; }
.panel-tab { padding: 0 3px; color: #222; }
.panel-tab.is-active { padding: 0 2px; border: solid #6d8093; border-width: 0 1px; background: #f1f2f4; color: #55788f; }

.main { display: flex; flex-direction: column; min-width: 0; }
.viewport {
  display: grid;
  flex: 1;
  min-height: 0;
  border: 1px solid #a9adb6;
  background: #fff;
  box-shadow: 0 0 0 1px #d9dce8;
}
.scene { grid-area: 1 / 1; width: 100%; height: 100%; min-height: 0; }
.hint { grid-area: 1 / 1; padding: 6px 7px; color: #888; font-size: 9px; line-height: 10px; }
.dimension { fill: #111; font-size: 18px; }
.dimension-far { font-size: 14px; font-style: italic; }
.axis-name { font-size: 7px; font-weight: bold; }

.doc-tabs { display: flex; height: 19px; padding: 2px 0; }
.doc-tab { display: flex; align-items: center; gap: 2px; padding: 0 8px 0 3px; border-left: 1px solid #9aa3b0; }
.doc-tab.is-active {
  gap: 1px;
  padding: 0 1px;
  border: solid #7f93ad;
  border-width: 0 1px 1px 1px;
  background: #f1f3f6;
  color: #24496f;
  font-family: Roboto, "Liberation Sans", sans-serif;
  font-weight: bold;
}
.doc-tab.open { gap: 1px; border: 0; }
.doc-nav { display: flex; align-items: center; gap: 4px; margin-left: auto; }

.guide { background: #f0f0f0; }
.guide-tab {
  width: 16px;
  height: 46px;
  border-right: 5px solid #c9c9c9;
  writing-mode: vertical-rl;
}

/* Status bar */
.status {
  display: flex;
  align-items: center;
  height: 21px;
  background: #2d5c87;
  color: #fff;
}
.status-text { flex: 1; padding-left: 6px; white-space: nowrap; }
.status-cell { display: flex; align-items: center; height: 17px; border-left: 1px solid #7f9dbc; }
.cell-a { width: 103px; }
.cell-b { justify-content: center; gap: 3px; width: 73px; padding-right: 9px; }
.cell-c { width: 63px; }
.cell-d { justify-content: flex-end; gap: 3px; width: 325px; padding-right: 15px; }
.cell-d .btn { gap: 2px; }
.cell-d .btn + .btn { margin-left: 1px; }
.status-sep { width: 1px; height: 17px; background: #7f9dbc; }
.sky { color: #79bdf6; }
.pale { color: #fff; }
.muted { color: #7893b0; }
.flip { transform: scale(-1, -1); }
```
